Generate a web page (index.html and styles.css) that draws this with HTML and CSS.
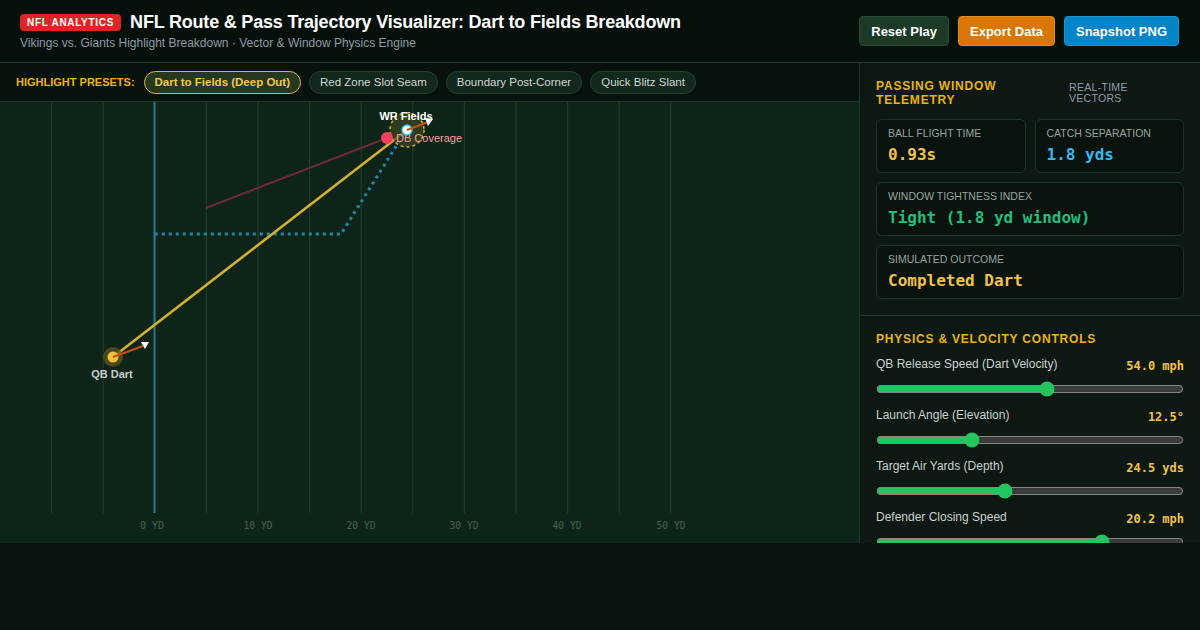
FILE: index.html
```html
<!DOCTYPE html>
<html lang="en">
  <head>
    <meta charset="UTF-8" />
    <meta name="viewport" content="width=device-width, initial-scale=1.0" />
    <title>NFL Route &amp; Pass Trajectory Visualizer</title>
    <link rel="stylesheet" href="styles.css">
  </head>
  <body>
    <div class="app">
      <header class="top_bar">
        <div class="top_bar_text">
          <div class="title_row">
            <span class="badge">NFL ANALYTICS</span>
            <h1>NFL Route &amp; Pass Trajectory Visualizer: Dart to Fields Breakdown</h1>
          </div>
          <p class="subtitle">Vikings vs. Giants Highlight Breakdown · Vector &amp; Window Physics Engine</p>
        </div>
        <div class="actions">
          <button class="btn btn_reset">Reset Play</button>
          <button class="btn btn_export">Export Data</button>
          <button class="btn btn_snapshot">Snapshot PNG</button>
        </div>
      </header>

      <main class="workspace">
        <section class="field_col">
          <div class="presets">
            <span class="presets_label">HIGHLIGHT PRESETS:</span>
            <button class="chip active">Dart to Fields (Deep Out)</button>
            <button class="chip">Red Zone Slot Seam</button>
            <button class="chip">Boundary Post-Corner</button>
            <button class="chip">Quick Blitz Slant</button>
          </div>
          <div class="field">
            <svg width="859" height="441" viewBox="0 0 859 441">
              <!-- yard lines -->
              <g stroke="#22392b" stroke-width="1.2">
                <line x1="51.6" y1="0" x2="51.6" y2="411" />
                <line x1="103.2" y1="0" x2="103.2" y2="411" />
                <line x1="206.4" y1="0" x2="206.4" y2="411" />
                <line x1="258" y1="0" x2="258" y2="411" />
                <line x1="309.6" y1="0" x2="309.6" y2="411" />
                <line x1="361.2" y1="0" x2="361.2" y2="411" />
                <line x1="412.8" y1="0" x2="412.8" y2="411" />
                <line x1="464.4" y1="0" x2="464.4" y2="411" />
                <line x1="516" y1="0" x2="516" y2="411" />
                <line x1="567.6" y1="0" x2="567.6" y2="411" />
                <line x1="619.2" y1="0" x2="619.2" y2="411" />
                <line x1="670.8" y1="0" x2="670.8" y2="411" />
              </g>
              <line x1="154.5" y1="0" x2="154.5" y2="411" stroke="#2a7894" stroke-width="2" />

              <g class="yard_text" text-anchor="middle">
                <text x="152" y="427" textLength="24" lengthAdjust="spacingAndGlyphs">0 YD</text>
                <text x="258" y="427" textLength="29" lengthAdjust="spacingAndGlyphs">10 YD</text>
                <text x="361" y="427" textLength="29" lengthAdjust="spacingAndGlyphs">20 YD</text>
                <text x="464" y="427" textLength="29" lengthAdjust="spacingAndGlyphs">30 YD</text>
                <text x="567" y="427" textLength="29" lengthAdjust="spacingAndGlyphs">40 YD</text>
                <text x="671" y="427" textLength="29" lengthAdjust="spacingAndGlyphs">50 YD</text>
              </g>

              <!-- defender pursuit -->
              <line x1="206" y1="106" x2="387" y2="36" stroke="#6a2b36" stroke-width="2" />
              <!-- wr route -->
              <polyline points="154.8,132 341,132 400,38 407,28" fill="none" stroke="#1f86a8" stroke-width="3" stroke-dasharray="3 4" />
              <!-- ball flight -->
              <line x1="113" y1="255" x2="407" y2="28" stroke="#d4b032" stroke-width="2.6" />

              <!-- QB -->
              <circle cx="113" cy="255" r="10" fill="#5e5420" opacity="0.75" />
              <circle cx="113" cy="255" r="5.5" fill="#f5c13b" />
              <line x1="113" y1="255" x2="143" y2="244" stroke="#c2510f" stroke-width="2" />
              <polygon points="141,240 149,240 145,247" fill="#ffffff" />
              <text class="player_label qb" x="112" y="276" text-anchor="middle">QB Dart</text>

              <!-- WR window -->
              <circle cx="407" cy="28" r="17" fill="#3a4720" fill-opacity="0.7" stroke="#d0aa2c" stroke-width="1.6" stroke-dasharray="3 3" />
              <circle cx="387" cy="36" r="6" fill="#f43f5e" />
              <text class="player_label db" x="396" y="40">DB Coverage</text>
              <circle cx="407" cy="28" r="5" fill="#ffffff" stroke="#38bdf8" stroke-width="1.5" />
              <line x1="407" y1="28" x2="428" y2="20" stroke="#c2510f" stroke-width="2" />
              <polygon points="425,16 433,17 428,24" fill="#ffffff" />
              <text class="player_label wr" x="406" y="18" text-anchor="middle">WR Fields</text>
            </svg>
          </div>
        </section>

        <aside class="side_panel">
          <div class="panel_block">
            <div class="block_head">
              <h2>PASSING WINDOW TELEMETRY</h2>
              <span class="head_note">REAL-TIME VECTORS</span>
            </div>
            <div class="stats">
              <div class="stat">
                <div class="stat_label">BALL FLIGHT TIME</div>
                <div class="stat_value yellow">0.93s</div>
              </div>
              <div class="stat">
                <div class="stat_label">CATCH SEPARATION</div>
                <div class="stat_value blue">1.8 yds</div>
              </div>
              <div class="stat wide">
                <div class="stat_label">WINDOW TIGHTNESS INDEX</div>
                <div class="stat_value green">Tight (1.8 yd window)</div>
              </div>
              <div class="stat wide">
                <div class="stat_label">SIMULATED OUTCOME</div>
                <div class="stat_value yellow">Completed Dart</div>
              </div>
            </div>
          </div>

          <div class="panel_block">
            <h2>PHYSICS &amp; VELOCITY CONTROLS</h2>
            <div class="control">
              <div class="control_head">
                <label for="speed">QB Release Speed (Dart Velocity)</label>
                <span class="control_value">54.0 mph</span>
              </div>
              <input type="range" id="speed" min="30" max="73" value="54" step="any" />
            </div>
            <div class="control">
              <div class="control_head">
                <label for="angle">Launch Angle (Elevation)</label>
                <span class="control_value">12.5°</span>
              </div>
              <input type="range" id="angle" min="0" max="41.5" value="12.5" step="any" />
            </div>
            <div class="control">
              <div class="control_head">
                <label for="depth">Target Air Yards (Depth)</label>
                <span class="control_value">24.5 yds</span>
              </div>
              <input type="range" id="depth" min="0" max="59" value="24.5" step="any" />
            </div>
            <div class="control">
              <div class="control_head">
                <label for="closing">Defender Closing Speed</label>
                <span class="control_value">20.2 mph</span>
              </div>
              <input type="range" id="closing" min="5" max="25.4" value="20.2" step="any" />
            </div>
          </div>
        </aside>
      </main>
    </div>
  </body>
</html>
```

FILE: styles.css
```css
* {
  box-sizing: border-box;
  padding: 0;
  margin: 0;
}
body {
  background-color: #0a140e;
  font-family: "Liberation Sans", Arial, sans-serif;
  color: #e5ece8;
}
.app {
  height: 543px;
  display: flex;
  flex-direction: column;
}
.top_bar {
  height: 63px;
  flex-shrink: 0;
  display: flex;
  justify-content: space-between;
  align-items: center;
  padding: 0 20px;
  background-color: #06100b;
  border-bottom: 1px solid #1d3b29;
}
.title_row {
  display: flex;
  align-items: center;
  gap: 9px;
}
.badge {
  background-color: #dc2626;
  color: #fff;
  font-size: 10px;
  font-weight: bold;
  letter-spacing: 0.7px;
  padding: 3px 7px;
  border-radius: 4px;
}
.top_bar h1 {
  font-size: 18px;
  font-weight: bold;
  color: #fff;
  letter-spacing: -0.2px;
}
.subtitle {
  margin-top: 3px;
  font-size: 12px;
  color: #8d9ba6;
}
.actions {
  display: flex;
  gap: 9px;
  margin-right: 1px;
}
.btn {
  font-family: "Liberation Sans", Arial, sans-serif;
  font-size: 13px;
  font-weight: bold;
  color: #fff;
  height: 30px;
  padding: 0 11px;
  border-radius: 4px;
  border: 1px solid transparent;
}
.btn_reset {
  background-color: #1c3a28;
  border-color: #2b4a36;
}
.btn_export {
  background-color: #d97706;
  border-color: #e08a1e;
}
.btn_snapshot {
  background-color: #0284c7;
  border-color: #1a93d0;
}
.workspace {
  flex: 1;
  display: grid;
  grid-template-columns: 859px 341px;
  min-height: 0;
}
.field_col {
  display: flex;
  flex-direction: column;
  background-color: #0f2418;
  overflow: hidden;
}
.presets {
  height: 39px;
  flex-shrink: 0;
  display: flex;
  align-items: center;
  gap: 8px;
  padding: 0 16px;
  background-color: #07120c;
  border-bottom: 1px solid #1d3b29;
}
.presets_label {
  font-size: 11px;
  font-weight: bold;
  color: #eab308;
  margin-right: 1px;
}
.chip {
  font-family: "Liberation Sans", Arial, sans-serif;
  font-size: 11.5px;
  color: #cdd6d1;
  background-color: #13281d;
  border: 1px solid #25432f;
  border-radius: 12px;
  height: 23px;
  padding: 0 10px;
}
.chip.active {
  color: #f1c84b;
  background-color: #26381f;
  border-color: #e0b63a;
  font-weight: bold;
}
.field svg {
  display: block;
}
.yard_text {
  font-family: "DejaVu Sans Mono", monospace;
  font-size: 10px;
  fill: #42624f;
}
.player_label {
  font-family: "Liberation Sans", Arial, sans-serif;
  font-size: 11px;
}
.player_label.qb {
  fill: #c4ccc8;
  font-weight: bold;
}
.player_label.wr {
  fill: #fff;
  font-weight: bold;
}
.player_label.db {
  fill: #f1a0a0;
}
.side_panel {
  background-color: #0e1813;
  border-left: 1px solid #1d3b29;
  overflow: hidden;
}
.panel_block {
  padding: 16px 16px 16px 16px;
  border-bottom: 1px solid #1d3b29;
}
.panel_block h2 {
  font-size: 12px;
  font-weight: bold;
  color: #eab308;
  letter-spacing: 0.8px;
}
.block_head {
  display: flex;
  align-items: center;
  margin-bottom: 12px;
}
.block_head h2 {
  flex: 1;
  line-height: 14px;
  padding-right: 60px;
}
.head_note {
  width: 115px;
  padding-right: 10px;
  font-size: 10.5px;
  line-height: 11px;
  color: #8d9ba6;
  letter-spacing: 0.3px;
}
.stats {
  display: grid;
  grid-template-columns: 1fr 1fr;
  gap: 9px 9px;
}
.stat {
  background-color: #08130d;
  border: 1px solid #1c3426;
  border-radius: 6px;
  padding: 7px 11px 8px 11px;
  height: 54px;
}
.stat.wide {
  grid-column: span 2;
}
.stat_label {
  font-size: 10.5px;
  color: #97a3a0;
}
.stat_value {
  margin-top: 6px;
  font-family: "DejaVu Sans Mono", monospace;
  font-weight: bold;
  font-size: 16px;
}
.stat_value.yellow {
  color: #f2c14a;
}
.stat_value.blue {
  color: #38b6f0;
}
.stat_value.green {
  color: #1fbf80;
}
.control {
  margin-top: 11px;
}
.control_head {
  display: flex;
  justify-content: space-between;
  align-items: flex-end;
}
.control_head label {
  font-size: 12px;
  color: #c9d2ce;
}
.control_value {
  font-family: "DejaVu Sans Mono", monospace;
  font-weight: bold;
  font-size: 12px;
  color: #f2c14a;
  margin-bottom: -2px;
}
.control input {
  width: 100%;
  display: block;
  margin-top: 10px;
  accent-color: #22c55e;
  color-scheme: dark;
}
```
